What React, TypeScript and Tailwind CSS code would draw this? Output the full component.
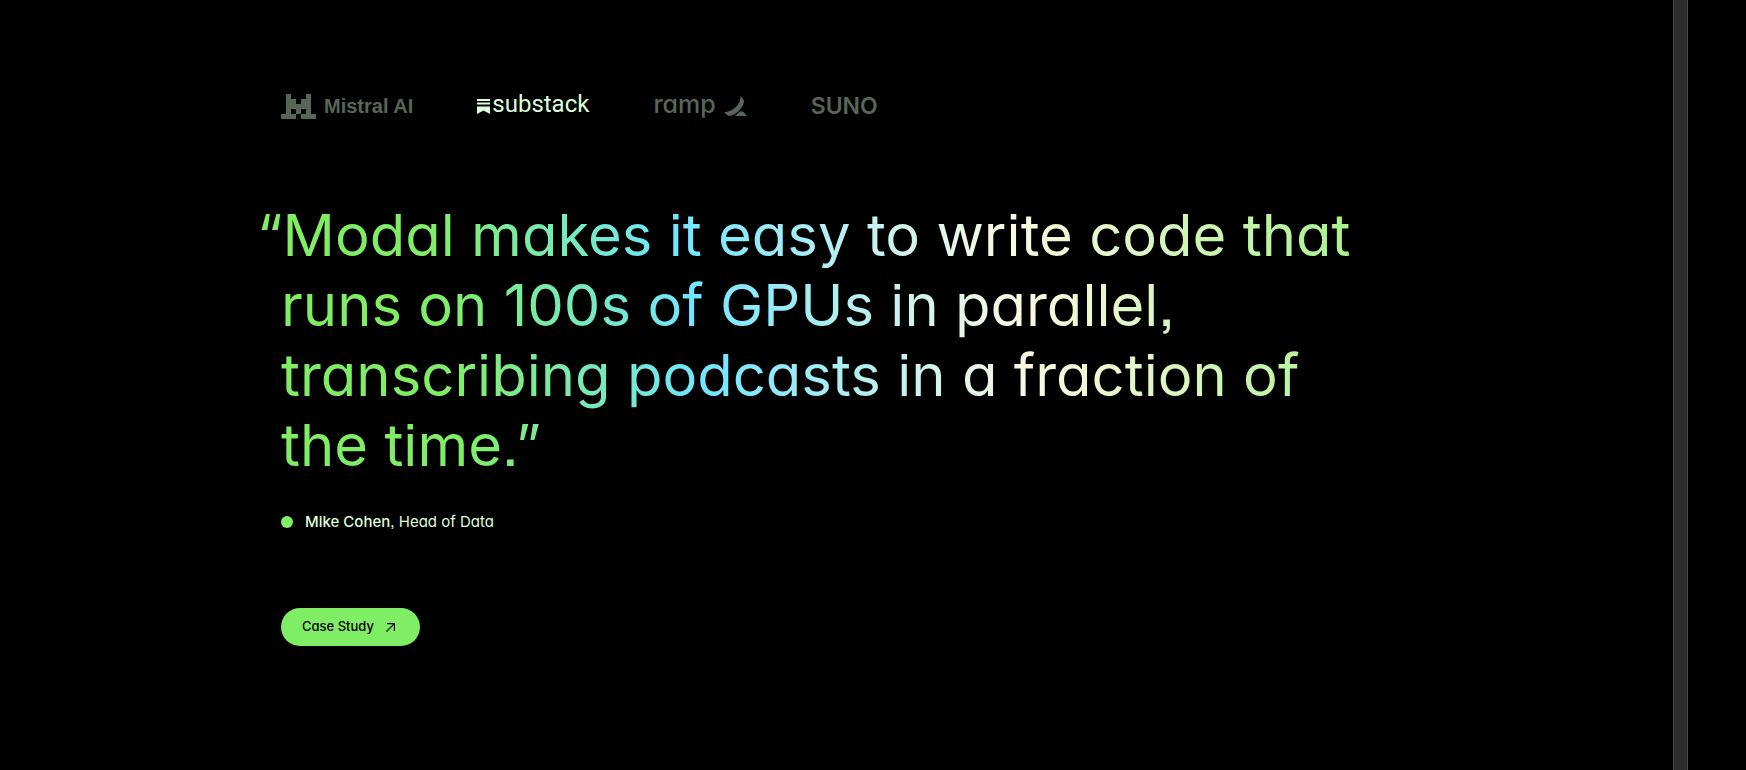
import { useState } from "react";
import type { ReactNode } from "react";

function MistralLogo() {
  return (
    <>
      <svg viewBox="0 0 35 25" className="h-[25px] w-[35px]" fill="currentColor" shapeRendering="crispEdges" aria-hidden="true">
        <path d="M5 0h5v5h5v5h5V5h5V0h5v20h5v5H20v-5h5v-5h-5v5h-5v-5h-5v5h5v5H0v-5h5z" />
      </svg>
      <span className="ml-2 font-['Liberation_Sans',sans-serif] text-xl font-bold leading-6">Mistral AI</span>
    </>
  );
}

function SubstackLogo() {
  return (
    <>
      <svg viewBox="0 0 13 15" className="h-[15px] w-[13px]" fill="currentColor" aria-hidden="true">
        <path d="M0 0h13v2H0zM0 3.5h13v2H0zM0 7.5h13V15L6.5 11.5 0 15z" />
      </svg>
      <span className="ml-0.5 pb-1 font-[Roboto,sans-serif] text-2xl leading-6">substack</span>
    </>
  );
}

function RampLogo() {
  return (
    <>
      <span className="pb-1 text-[25px] font-medium leading-6">ramp</span>
      <svg viewBox="0 0 23 21" className="ml-2 h-[21px] w-[23px]" fill="currentColor" aria-hidden="true">
        <path d="M16.500 0C18.500 1.500 20 3.500 20 6C18 13.500 12 19 4.500 20L0 16.500C8.500 15.500 17 9 16.500 0zM11 20L16 15.500H19L23 20z" />
      </svg>
    </>
  );
}

function SunoLogo() {
  return <span className="text-[23px] font-semibold leading-6">SUNO</span>;
}

const customers: { id: string; label: string; logo: ReactNode }[] = [
  { id: "mistral", label: "Mistral AI", logo: <MistralLogo /> },
  { id: "substack", label: "Substack", logo: <SubstackLogo /> },
  { id: "ramp", label: "Ramp", logo: <RampLogo /> },
  { id: "suno", label: "Suno", logo: <SunoLogo /> },
];

export default function App() {
  const [active, setActive] = useState("substack");

  return (
    <div className="flex min-h-screen bg-black font-[Inter,sans-serif] [font-feature-settings:'cv11','ss07']">
      <main className="min-w-0 flex-1">
        <section className="mx-auto max-w-[1111px] pt-[92px] pb-16">
          <div className="flex flex-wrap items-center gap-16">
            {customers.map((c) => (
              <button
                key={c.id}
                type="button"
                aria-label={c.label}
                aria-pressed={active === c.id}
                onClick={() => setActive(c.id)}
                className={`flex items-center ${active === c.id ? "text-[#ddffdc]" : "text-[#586657]"}`}
              >
                {c.logo}
              </button>
            ))}
          </div>

          <blockquote className="-ml-6 mt-20 bg-[linear-gradient(80deg,#80ee64_18%,#70e6ff_39%,#fdf9e3_67%,#80ee64_110%)] bg-clip-text pl-6 -indent-6 text-[58px] leading-[70px] text-transparent">
            “Modal makes it easy to write code that runs on 100s of GPUs in parallel, transcribing podcasts in a fraction of the time.”
          </blockquote>

          <p className="mt-[30px] flex items-center gap-3 text-[15px] leading-6 text-[#ddffdc]">
            <span className="size-3 rounded-full bg-[#80ee64]" />
            <span>
              <span className="font-medium">Mike Cohen</span>, Head of Data
            </span>
          </p>

          <a
            href="#case-study"
            className="mt-[74px] inline-flex h-[38px] items-center gap-3 rounded-full bg-[#80ee64] pr-[25px] pl-[21px] text-[13px] font-medium text-black"
          >
            Case Study
            <svg viewBox="0 0 9 9" className="size-[9px]" fill="none" stroke="currentColor" strokeWidth="1.2" aria-hidden="true">
              <path d="M1 .6h7.400V8M8.400.6.500 8.500" />
            </svg>
          </a>
        </section>
      </main>
      <div className="w-[15px] shrink-0 border-x border-[#484848] bg-[#2c2c2c]" />
      <div className="w-[58px] shrink-0" />
    </div>
  );
}
